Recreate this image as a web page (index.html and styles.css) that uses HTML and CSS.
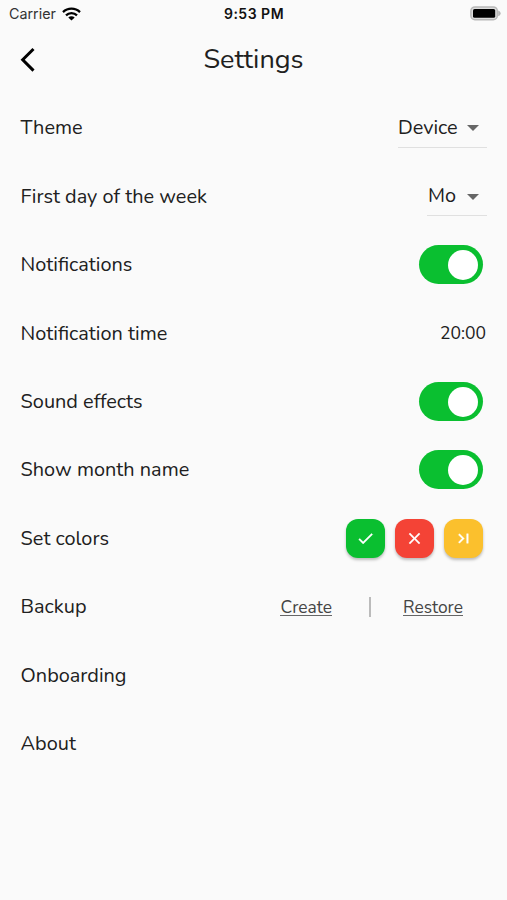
FILE: index.html
```html
<!DOCTYPE html>
<html lang="en">
<head>
<meta charset="utf-8">
<title>Settings</title>
<link rel="stylesheet" href="styles.css">
</head>
<body>
<div class="status">
  <div class="carrier"><span>Carrier</span>
    <svg width="19" height="14" viewBox="0 0 19 14"><g fill="none" stroke="#000" stroke-width="2.3"><path d="M1 5.1a12.2 12.2 0 0 1 17 0"/><path d="M4 8.4a7.8 7.8 0 0 1 11 0"/></g><path d="M9.5 13.6 6.3 10.5a4.6 4.6 0 0 1 6.4 0z"/></svg>
  </div>
  <div class="clock">9:53 PM</div>
  <svg class="battery" width="31" height="15" viewBox="0 0 31 15"><rect x=".9" y=".9" width="26.4" height="12.8" rx="4" fill="#ddd" stroke="#b8b8b8" stroke-width="1.5"/><rect x="3" y="3" width="22.2" height="8.8" rx="1.6"/><path d="M28.2 4.4c3.2 1 3.2 4.8 0 5.8z" fill="#b5b5b5"/></svg>
</div>
<header class="header">
  <svg class="back" width="16" height="26" viewBox="0 0 16 26"><path d="M13.5 2 2.7 12.8l10.8 10.8" fill="none" stroke="#000" stroke-width="3"/></svg>
  <h1>Settings</h1>
</header>
<main class="list">
  <div class="row"><span>Theme</span><div class="select device"><span>Device</span><i></i></div></div>
  <div class="row"><span>First day of the week</span><div class="select day"><span>Mo</span><i></i></div></div>
  <div class="row"><span>Notifications</span><div class="toggle"></div></div>
  <div class="row"><span>Notification time</span><span class="time">20:00</span></div>
  <div class="row"><span>Sound effects</span><div class="toggle"></div></div>
  <div class="row"><span>Show month name</span><div class="toggle"></div></div>
  <div class="row"><span>Set colors</span>
    <div class="colors">
      <div class="swatch green"><svg viewBox="0 0 24 24"><path d="M9 16.2 4.8 12l-1.4 1.4L9 19 21 7l-1.4-1.4z"/></svg></div>
      <div class="swatch red"><svg viewBox="0 0 24 24"><path d="M19 6.4 17.6 5 12 10.6 6.4 5 5 6.4l5.6 5.6L5 17.6 6.4 19l5.6-5.6 5.6 5.6 1.4-1.4-5.6-5.6z"/></svg></div>
      <div class="swatch amber"><svg viewBox="0 0 24 24"><path d="M5.6 7.4 10.2 12l-4.6 4.6L7 18l6-6-6-6zM16 6h2v12h-2z"/></svg></div>
    </div>
  </div>
  <div class="row"><span>Backup</span>
    <div class="backup"><a class="create">Create</a><b></b><a class="restore">Restore</a></div>
  </div>
  <div class="row"><span>Onboarding</span></div>
  <div class="row"><span>About</span></div>
</main>
</body>
</html>
```
FILE: styles.css
```css
* { box-sizing: border-box; }
body {
  margin: 0;
  height: 900px;
  overflow: hidden;
  background: #fafafa;
  color: #202020;
  font-family: Nunito, Lato, sans-serif;
}
svg { display: block; }
.status {
  display: grid;
  grid-template-columns: 1fr auto 1fr;
  align-items: center;
  height: 27px;
  padding: 0 6px 0 9px;
  font-family: Inter, sans-serif;
}
.carrier { display: flex; align-items: center; gap: 6px; font-size: 14.3px; color: #333; }
.clock { margin-right: 2px; font-size: 14px; font-weight: 600; letter-spacing: .5px; color: #111; }
.battery { justify-self: end; }
.header {
  display: grid;
  grid-template-columns: 16px 1fr 16px;
  align-items: center;
  height: 66.8px;
  padding: 0 20px;
}
.back { margin-top: -1px; }
h1 { margin: -2px 0 0; text-align: center; font-size: 27px; font-weight: 400; }
.list { font-size: 19.9px; }
.row {
  display: flex;
  align-items: center;
  justify-content: space-between;
  height: 68.4px;
  padding: 0 20px 0 20.6px;
}
.select {
  display: flex;
  align-items: center;
  justify-content: space-between;
  height: 40px;
  padding-right: 8px;
  border-bottom: 1px solid #e0e0e0;
}
.device { width: 89px; }
.day { width: 60px; padding-left: 1px; }
.select i { margin-top: 2px; border: 6px solid transparent; border-top-color: #666; border-bottom: 0; }
.toggle {
  display: flex;
  justify-content: flex-end;
  align-items: center;
  width: 64px;
  height: 39px;
  margin-right: 4.5px;
  padding: 0 4.5px;
  border-radius: 20px;
  background: #0abf30;
}
.toggle::after { content: ""; width: 30px; height: 30px; border-radius: 50%; background: #fff; }
.time { margin: 0 1px 0 0; font-size: 17.5px; }
.colors { display: flex; gap: 10px; margin-right: 4.5px; }
.swatch {
  display: grid;
  place-items: center;
  width: 39px;
  height: 39px;
  border-radius: 12px;
  box-shadow: 0 2px 3px rgba(0, 0, 0, .25);
}
.swatch svg { width: 19px; height: 19px; fill: #fff; stroke: #fff; stroke-width: .5; }
.green { background: #0abf30; }
.red { background: #f44336; }
.amber { background: #fbc02d; }
.backup { display: flex; align-items: center; margin-right: 24px; font-size: 17.4px; color: #444; }
.backup a { margin-top: 1px; border-bottom: 1px solid #666; height: 17px; line-height: 17.5px; }
.backup b { width: 1.5px; height: 20px; margin: 0 32px 0 37.5px; background: #bbb; }
```
